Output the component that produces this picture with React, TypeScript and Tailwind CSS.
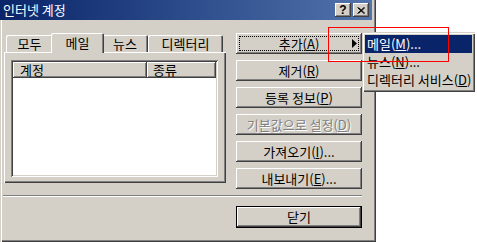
import React from 'react';

// Win2000 style bevels
const raised =
    'shadow-[inset_-1px_-1px_#404040,inset_1px_1px_#ffffff,inset_-2px_-2px_#808080,inset_2px_2px_#d4d0c8]';
const sunken =
    'shadow-[inset_1px_1px_#808080,inset_-1px_-1px_#ffffff,inset_2px_2px_#404040,inset_-2px_-2px_#d4d0c8]';
const headerCell = 'shadow-[inset_-1px_-1px_#404040,inset_1px_1px_#ffffff,inset_-2px_-2px_#808080]';

function Btn({ children, disabled, focused, arrow }: {
    children: React.ReactNode;
    disabled?: boolean;
    focused?: boolean;
    arrow?: boolean;
}) {
    return (
        <div className={`relative h-[21px] w-[126px] flex items-center justify-center bg-[#d4d0c8] ${raised} ${disabled ? 'text-[#808080] [text-shadow:1px_1px_#ffffff]' : ''}`}>
            {focused && <div className="absolute inset-[3px] border border-dotted border-black" />}
            <span>{children}</span>
            {arrow && (
                <svg className="absolute right-[5px] top-[6px]" width="5" height="9" viewBox="0 0 5 9">
                    <polygon points="0,0 5,4.5 0,9" fill="#000" />
                </svg>
            )}
        </div>
    );
}

function Tab({ label, width, selected }: { label: string; width: string; selected?: boolean }) {
    if (selected) {
        return (
            <div className={`relative z-10 -mx-[2px] -mb-[1px] h-[20px] ${width} flex items-center justify-center bg-[#d4d0c8] rounded-t-[2px] shadow-[inset_1px_1px_#ffffff,inset_-1px_0_#404040,inset_-2px_0_#808080] pb-[1px]`}>
                {label}
            </div>
        );
    }
    return (
        <div className={`h-[17px] ${width} flex items-center justify-center bg-[#d4d0c8] rounded-t-[2px] shadow-[inset_1px_1px_#ffffff,inset_-1px_0_#404040,inset_-2px_0_#808080]`}>
            {label}
        </div>
    );
}

export default function App() {
    return (
        <div className="relative w-[477px] h-[242px] overflow-hidden bg-white text-black text-[13px] leading-[14px] font-['Noto_Sans_CJK_KR',sans-serif]">
            {/* dialog */}
            <div className="w-[376px] h-[242px] flex flex-col bg-[#d4d0c8] shadow-[inset_1px_0_#d4d0c8,inset_2px_0_#ffffff,inset_-1px_-1px_#404040,inset_-2px_-2px_#808080]">
                {/* title bar */}
                <div className="h-[20px] w-[372px] flex items-center justify-between bg-linear-to-r from-[#0a246a] to-[#5273ab] pl-[3px] pr-[3px]">
                    <span className="text-white">인터넷 계정</span>
                    <div className="flex gap-[2px]">
                        <div className={`w-[16px] h-[14px] flex items-center justify-center bg-[#d4d0c8] ${raised} font-bold text-[12px] leading-none font-['Liberation_Sans',sans-serif]`}>?</div>
                        <div className={`w-[16px] h-[14px] flex items-center justify-center bg-[#d4d0c8] ${raised}`}>
                            <svg width="8" height="7" viewBox="0 0 8 7">
                                <path d="M0.5 0.5 L7 6.5 M1.5 0.5 L8 6.5 M7 0.5 L0.5 6.5 M8 0.5 L1.5 6.5" stroke="#000" strokeWidth="1" />
                            </svg>
                        </div>
                    </div>
                </div>

                <div className="flex mt-[13px]">
                    {/* tabs + list */}
                    <div className="ml-[4px] w-[222px] flex flex-col">
                        <div className="h-[19px] flex items-end pl-[2px]">
                            <Tab label="모두" width="w-[47px]" />
                            <Tab label="메일" width="w-[53px]" selected />
                            <Tab label="뉴스" width="w-[46px]" />
                            <Tab label="디렉터리" width="w-[75px]" />
                        </div>
                        <div className="h-[131px] pl-[7px] pt-[8px] shadow-[inset_1px_1px_#ffffff,inset_-1px_-1px_#404040,inset_-2px_-2px_#808080]">
                            <div className={`w-[207px] h-[117px] bg-white p-[2px] ${sunken}`}>
                                <div className="flex h-[16px] bg-[#d4d0c8]">
                                    <div className={`w-[134px] pl-[7px] flex items-center ${headerCell}`}>계정</div>
                                    <div className={`flex-1 pl-[6px] flex items-center ${headerCell}`}>종류</div>
                                </div>
                            </div>
                        </div>
                    </div>

                    {/* buttons */}
                    <div className="ml-[10px] flex flex-col gap-[6px]">
                        <Btn focused arrow>추가(<u className="underline-offset-1">A</u>)</Btn>
                        <Btn>제거(<u className="underline-offset-1">R</u>)</Btn>
                        <Btn>등록 정보(<u className="underline-offset-1">P</u>)</Btn>
                        <Btn disabled>기본값으로 설정(<u className="underline-offset-1">D</u>)</Btn>
                        <Btn>가져오기(<u className="underline-offset-1">I</u>)...</Btn>
                        <Btn>내보내기(<u className="underline-offset-1">E</u>)...</Btn>
                    </div>
                </div>

                {/* separator */}
                <div className="mt-[6px] ml-[3px] w-[359px] h-[2px] border-t border-[#808080] border-b border-b-white" />

                <div className="mt-[9px] ml-[236px] w-[126px] h-[22px] border border-black">
                    <div className={`h-full flex items-center justify-center bg-[#d4d0c8] ${raised}`}>닫기</div>
                </div>
            </div>

            {/* submenu */}
            <div className="absolute left-[362px] top-[32px] w-[113px] h-[60px] p-[3px] flex flex-col bg-[#d4d0c8] shadow-[inset_1px_1px_#d4d0c8,inset_2px_2px_#ffffff,inset_-1px_-1px_#404040,inset_-2px_-2px_#808080]">
                <div className="h-[18px] flex items-center pl-[2px] bg-[#0a246a] text-white">메일(<u className="underline-offset-1">M</u>)...</div>
                <div className="h-[18px] flex items-center pl-[2px]">뉴스(<u className="underline-offset-1">N</u>)...</div>
                <div className="h-[18px] flex items-center pl-[2px] whitespace-nowrap">디렉터리 서비스(<u className="underline-offset-1">D</u>)</div>
            </div>

            {/* highlight box */}
            <div className="absolute left-[328px] top-[27px] w-[121px] h-[35px] border border-[#ff0000]" />
        </div>
    );
}
